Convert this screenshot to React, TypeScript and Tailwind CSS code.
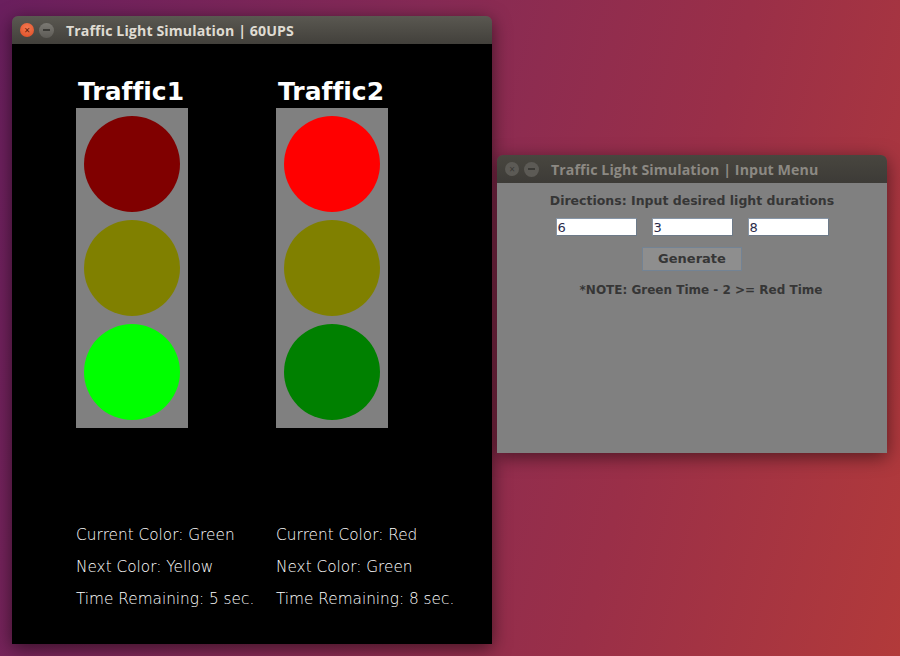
import React from 'react';

const lights = [
  {
    name: 'Traffic1',
    colors: ['bg-[#800000]', 'bg-[#808000]', 'bg-[#00ff00]'],
    lines: ['Current Color: Green', 'Next Color: Yellow', 'Time Remaining: 5 sec.'],
  },
  {
    name: 'Traffic2',
    colors: ['bg-[#ff0000]', 'bg-[#808000]', 'bg-[#008000]'],
    lines: ['Current Color: Red', 'Next Color: Green', 'Time Remaining: 8 sec.'],
  },
];

const TitleBar = ({ title, active }: { title: string; active: boolean }) => (
  <div
    className={`h-[28px] flex items-center rounded-t-[6px] pl-[8px] ${
      active
        ? 'bg-[linear-gradient(#5a5851,#42403b)]'
        : 'bg-[linear-gradient(#48463f,#3d3b37)]'
    }`}
  >
    <span
      className={`w-[14px] h-[14px] rounded-full flex items-center justify-center text-[10px] leading-none ${
        active
          ? 'bg-[radial-gradient(circle_at_50%_35%,#f47a52,#dc4a22)] text-[#5a1a08]'
          : 'bg-[#5c5a55] text-[#3a3935]'
      }`}
    >
      ×
    </span>
    <span
      className={`ml-[5px] w-[15px] h-[15px] rounded-full flex items-center justify-center ${
        active ? 'bg-[linear-gradient(#7b7973,#5d5b56)]' : 'bg-[#5c5a55]'
      }`}
    >
      <span className={`w-[7px] h-[1.5px] ${active ? 'bg-[#3b3a36]' : 'bg-[#3a3935]'}`} />
    </span>
    <span
      className={`ml-[12px] mt-[2px] text-[14.2px] font-bold tracking-[0.1px] ${
        active ? 'text-[#dfdbd2]' : 'text-[#8c8983]'
      }`}
      style={{ fontFamily: '"Open Sans", "DejaVu Sans", sans-serif' }}
    >
      {title}
    </span>
  </div>
);

const App = () => {
  return (
    <div className="relative w-[900px] h-[656px] overflow-hidden bg-[linear-gradient(105deg,#6a1f5e_0%,#862a55_40%,#9a2f48_70%,#b23a3a_100%)]">
      {/* main simulation window */}
      <div className="absolute left-[12px] top-[16px] w-[480px] shadow-[0_4px_18px_rgba(0,0,0,0.55)] rounded-t-[6px]">
        <TitleBar title="Traffic Light Simulation | 60UPS" active />
        <div className="h-[600px] bg-black flex pl-[64px] pt-[34px]">
          {lights.map((l) => (
            <div key={l.name} className="w-[200px] flex flex-col">
              <div
                className="h-[28px] leading-[28px] text-[25px] font-bold text-white pl-[2px] [font-variant-ligatures:none]"
                style={{ fontFamily: '"DejaVu Sans", sans-serif' }}
              >
                {l.name}
              </div>
              <div className="mt-[2px] w-[112px] h-[320px] bg-[#808080] flex flex-col gap-[8px] p-[8px]">
                {l.colors.map((c, i) => (
                  <div key={i} className={`w-[96px] h-[96px] rounded-full ${c}`} />
                ))}
              </div>
              <div
                className="mt-[91px] text-white text-[15.3px] leading-[32px] whitespace-nowrap font-extralight"
                style={{ fontFamily: '"DejaVu Sans", sans-serif' }}
              >
                {l.lines.map((t) => (
                  <div key={t}>{t}</div>
                ))}
              </div>
            </div>
          ))}
        </div>
      </div>

      {/* input menu window */}
      <div className="absolute left-[497px] top-[155px] w-[390px] shadow-[0_4px_18px_rgba(0,0,0,0.5)] rounded-t-[6px]">
        <TitleBar title="Traffic Light Simulation | Input Menu" active={false} />
        <div
          className="h-[270px] bg-[#808080] flex flex-col items-center text-[#363636] font-bold"
          style={{ fontFamily: '"DejaVu Sans", sans-serif' }}
        >
          <div className="mt-[9px] text-[12.5px] leading-[18px]">Directions: Input desired light durations</div>
          <div className="mt-[8px] flex gap-[15px]">
            {['6', '3', '8'].map((v) => (
              <div
                key={v}
                className="w-[81px] h-[18px] bg-white border border-[#8796a8] border-r-[#6d7a88] border-b-[#6d7a88] pl-[1px] text-[13px] leading-[17px] font-normal text-[#2b2b4a]"
              >
                {v}
              </div>
            ))}
          </div>
          <div className="mt-[11px] w-[100px] h-[24px] bg-[#8e8e8e] border border-[#738394] flex items-center justify-center text-[13px]">
            Generate
          </div>
          <div className="mt-[10px] ml-[18px] text-[12px] leading-[18px]">*NOTE: Green Time - 2 &gt;= Red Time</div>
        </div>
      </div>
    </div>
  );
};

export default App;
